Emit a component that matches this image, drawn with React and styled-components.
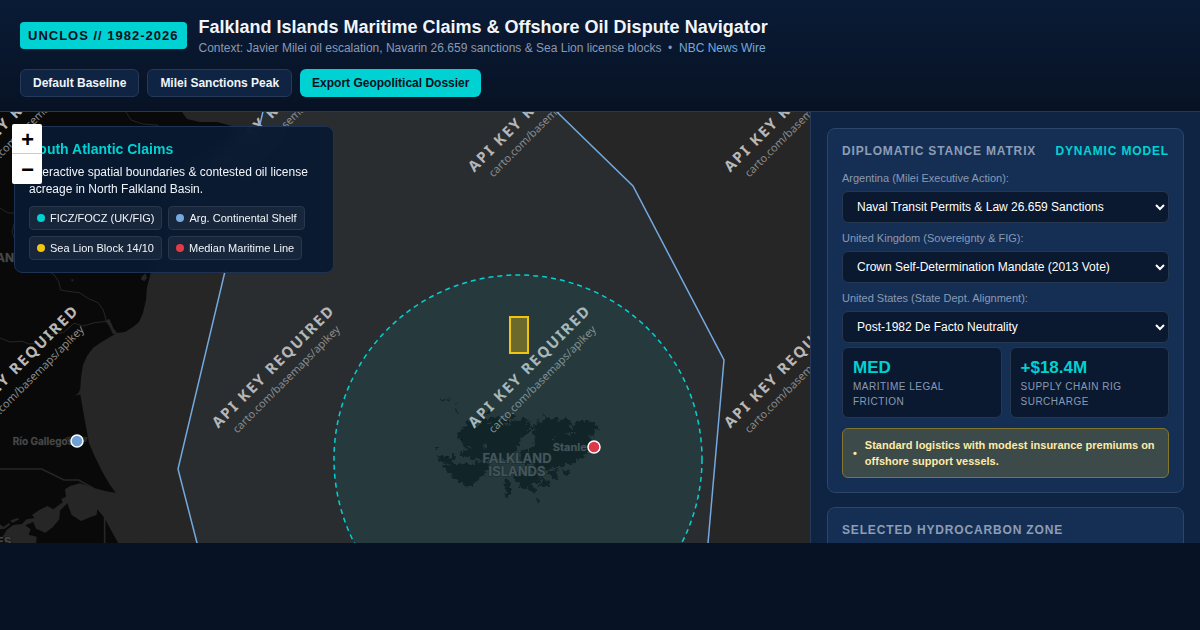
import { useState } from "react";
import styled, { createGlobalStyle } from "styled-components";

const GlobalStyle = createGlobalStyle`
    * {
        box-sizing: border-box;
    }
    body {
        margin: 0;
        background: #071224;
        color: #f1f5f9;
        font-family: "Liberation Sans", Arial, sans-serif;
    }
    button, select {
        font-family: inherit;
    }
`;

const Page = styled.div`
    height: 100vh;
    padding-bottom: 87px;
    display: flex;
    flex-direction: column;
    overflow: hidden;
`;

const Header = styled.header`
    display: flex;
    flex-direction: column;
    gap: 12px;
    padding: 14px 20px;
    background: linear-gradient(180deg, #0a1b36 0%, #071224 100%);
    border-bottom: 1px solid #263750;
`;

const Brand = styled.div`
    display: flex;
    align-items: center;
    gap: 12px;
`;

const Badge = styled.span`
    padding: 6px 8px;
    border-radius: 4px;
    background: #00d2d3;
    color: #061021;
    font-size: 13px;
    line-height: 15px;
    font-weight: 700;
    letter-spacing: 1px;
    white-space: nowrap;
`;

const Title = styled.h1`
    margin: 0;
    font-size: 18px;
    line-height: 26px;
    font-weight: 700;
`;

const Subtitle = styled.p`
    margin: 0;
    color: #8a99b3;
    font-size: 12px;
    line-height: 17px;
`;

const SourceLink = styled.a`
    color: #74a9de;
    text-decoration: none;
`;

const Actions = styled.div`
    display: flex;
    flex-wrap: wrap;
    gap: 8px;
`;

const Button = styled.button`
    padding: 6px 12px;
    border: ${(props) => (props.$primary ? "0" : "1px solid #273956")};
    border-radius: 6px;
    background: ${(props) => (props.$primary ? "#00d2d3" : "#0f2342")};
    color: ${(props) => (props.$primary ? "#061021" : "#f1f5f9")};
    font-size: 12px;
    line-height: 14px;
    font-weight: 700;
    cursor: pointer;
`;

const Workspace = styled.main`
    flex: 1;
    min-height: 0;
    display: grid;
    grid-template-columns: minmax(0, 1fr) 390px;
`;

const MapArea = styled.section`
    position: relative;
    overflow: hidden;
    background: #262626;
`;

const MapCanvas = styled.svg`
    display: block;
    width: 100%;
    height: 100%;
`;

const ZoomControl = styled.div`
    position: absolute;
    top: 12px;
    left: 12px;
    z-index: 2;
    display: flex;
    flex-direction: column;
    border-radius: 2px;
    overflow: hidden;
`;

const ZoomButton = styled.button`
    width: 30px;
    height: 30px;
    padding: 6px 0 0;
    border: 0;
    border-bottom: ${(props) => (props.$divided ? "1px solid #ccc" : "0")};
    background: #fff;
    color: #000;
    font: bold 22px/24px "Liberation Mono", monospace;
    text-indent: 1px;
    cursor: pointer;
`;

const MapCard = styled.aside`
    position: absolute;
    top: 14px;
    left: 14px;
    width: 320px;
    padding: 14px 14px 12px;
    border: 1px solid #1e3354;
    border-radius: 8px;
    background: rgba(8, 25, 49, 0.94);
    backdrop-filter: blur(8px);
`;

const MapCardTitle = styled.h2`
    margin: 0 0 7px;
    color: #00d2d3;
    font-size: 14px;
    line-height: 16px;
`;

const MapCardText = styled.p`
    margin: 0 0 8px;
    font-size: 12px;
    line-height: 17px;
`;

const Legend = styled.ul`
    display: flex;
    flex-wrap: wrap;
    gap: 6px;
    margin: 0;
    padding: 0;
    list-style: none;
`;

const LegendItem = styled.li`
    display: flex;
    align-items: center;
    gap: 5px;
    padding: 4px 7px;
    border: 1px solid #28374c;
    border-radius: 4px;
    background: #17263b;
    font-size: 11px;
    line-height: 14px;
`;

const Dot = styled.span`
    width: 8px;
    height: 8px;
    border-radius: 50%;
    background: ${(props) => props.$color};
`;

const Sidebar = styled.aside`
    display: flex;
    flex-direction: column;
    gap: 14px;
    padding: 16px;
    border-left: 1px solid #263a58;
    background: #0f2342;
    overflow: hidden;
`;

const Card = styled.section`
    flex: none;
    padding: 14px;
    border: 1px solid #2c456b;
    border-radius: 8px;
    background: #152f54;
`;

const CardHeading = styled.h2`
    display: flex;
    justify-content: space-between;
    margin: 0 0 12px;
    color: #8d9db7;
    font-size: 12px;
    line-height: 16px;
    letter-spacing: 0.07em;
    text-transform: uppercase;
`;

const Highlight = styled.span`
    color: #00d2d3;
`;

const Field = styled.div`
    display: flex;
    flex-direction: column;
    gap: 6px;
    margin-bottom: 8px;
`;

const Label = styled.label`
    color: #8a99b3;
    font-size: 11px;
    line-height: 14px;
`;

const Select = styled.select`
    width: 100%;
    height: 32px;
    padding: 6px 10px;
    border: 1px solid #263750;
    border-radius: 6px;
    background: #0a1930;
    color: #fff;
    font-size: 12px;
`;

const Metrics = styled.div`
    display: grid;
    grid-template-columns: 1fr 1fr;
    gap: 8px;
    margin: -4px 0 10px;
`;

const Metric = styled.div`
    padding: 8px 10px;
    border: 1px solid #263750;
    border-radius: 6px;
    background: #0a1930;
`;

const MetricValue = styled.div`
    color: #00d2d3;
    font-size: 17px;
    line-height: 23px;
    font-weight: 700;
`;

const MetricLabel = styled.div`
    color: #8a99b3;
    font-size: 10px;
    line-height: 15px;
    letter-spacing: 0.05em;
    text-transform: uppercase;
`;

const Alert = styled.div`
    display: flex;
    align-items: center;
    gap: 8px;
    padding: 8px 10px;
    border: 1px solid #84752f;
    border-radius: 6px;
    background: #3d4a4a;
    color: #ffeaa7;
    font-size: 11px;
    line-height: 16px;
    font-weight: 700;
`;

const legend = [
  { label: "FICZ/FOCZ (UK/FIG)", color: "#00d2d3" },
  { label: "Arg. Continental Shelf", color: "#74a9de" },
  { label: "Sea Lion Block 14/10", color: "#f1c40f" },
  { label: "Median Maritime Line", color: "#e63946" },
];

const stances = [
  {
    id: "argentina",
    label: "Argentina (Milei Executive Action):",
    value: "Naval Transit Permits & Law 26.659 Sanctions",
  },
  {
    id: "uk",
    label: "United Kingdom (Sovereignty & FIG):",
    value: "Crown Self-Determination Mandate (2013 Vote)",
  },
  {
    id: "us",
    label: "United States (State Dept. Alignment):",
    value: "Post-1982 De Facto Neutrality",
  },
];

// tiles repeat every 256px
const tileMarks = [
  [21, 2], [277, 2], [533, 2], [789, 2],
  [21, 258], [277, 258], [533, 258], [789, 258],
];

const Mainland = () => (
  <g>
    <path
      fill="#090909"
      d="M0 0H182L187 7 200 10 217 10 232 14 236 24 222 40 196 48 176 66 166 92 160 122 151 160
        147 175 146 188 143 201 139 210 133 215 125 220 117 221 110 225 100 231 93 236 87 244 83 253
        81 265 80 281 83 298 86 315 89 331 95 345 103 361 110 373 116 381 108 394 120 431 120 440H0Z"
    />
    <g transform="translate(0 158) scale(0.3333)" fill="#262626">
      <path
        d="M350 668L300 662 270 650 240 640 210 648 195 658 198 680 184 687 188 697 160 718 142 708
          118 720 96 735 104 744 80 748 66 762 40 765 20 780 8 800 18 806 10 829H108L110 800 86 794
          92 778 76 766 100 756 108 776 136 788 158 772 178 748 180 722 202 700 215 735 243 753 272 741
          290 735 292 718 314 745 330 775 360 829H420V600Z"
      />
      <path d="M0 763l10 8 18-13 2 6-16 12-14 2zM30 752l22-8 6 4-20 10z" />
      <path d="M315 150l14-2 12 28 12 14-14 3-10-22z" />
      <path d="M241 355l-4 12-34 32 22-22 18-4zM190 508l12-8 30-2 32 4-6 14-28 4z" />
      <path d="M425 20l12-10 4 14-8 10-10-6zM214 28h6v6h-6zM432 2h8v6h-8z" />
    </g>
    <g
      transform="translate(0 158) scale(0.3333)"
      fill="none"
      stroke="#262626"
      strokeWidth="3"
    >
      <path d="M140 0l22 14 14 20 6 26 22 4 34 4 28 18 28 12 16 22 8 30M322 154l-38 4-34 10-28-8-32 28-40 6-32 26-30 2-22-8-36 2-30-12H0" />
      <path strokeWidth="5" d="M0 597H125L192 630H236L284 657 344 673M314 740V829" />
    </g>
    <path
      fill="none"
      stroke="#242424"
      d="M126 0l5 8 12 4 14 1 5 3M0 96l8 5h10M14 112l-2 8 3 8"
    />
  </g>
);

const Islands = () => (
  <g filter="url(#coast)">
    <g transform="translate(425 273) scale(0.3333)" fill="#090909">
      {/* west */}
      <path
        d="M132 106l14 2 10 18 12-8-4-18 12-6 10 12 14-8 12 4 8-8 16 10 12-2 8 10 14-8 10 6 12-8
          6 10 14 2 8 8 16 4-8 8-14 4-2 12-12 8-8 14-10 10-6 12-14 10-6 14-12 4-16-4-14 8-18-4-14 8
          -14-8-16-2-12 8-6-10-16 2-10-12 4-10 14 6 16-4 12 4 4-8-14-4-10-10-12-2-6-12-14-6-8-8z"
      />
      <path d="M104 156l12 10 8 16 14 8 20-4 14 4 12-6 8 8-16 10-18-2-14 8-22 2-6-8 12-6-12-12-8-14z" />
      <path
        d="M70 240l14-6 10 8 12-10 8 8 14-6 12 6 10-10 14 4 10-6 14 8 6 12-14 8 4 12-16 6-6 10-14 4
          -4 12-12-2-10 8-8-12-12-2-4-10-14-2-6-12-12-6-8-12-6-6z"
      />
      <path d="M34 212l14 4 10-4 16 8 12-12 6 10-8 10 4 12-16-6-14 4-8-10-12-4zM30 184l8 2-2 12-6-2z" />
      <path d="M42 36l14 6 4 8-12-6zM66 42l8 4-2 4zM90 54l10 2-4 6zM90 70l10 4-4 8z" />
      <path d="M176 84l22-6 2 6-16 6zM248 92l16-4 10 6-8 6-14-2zM288 96l12 2 12 10-12 4-14-6z" />
      {/* east */}
      <path
        d="M354 84l10 14 14 6 18-4 8 8 16-8 18 4 4 14-10 6 8 10 4-16 16-8 24-2 18 4 10 8 6 14-14 4
          8 12-22 2 6 10 16 6-6 8-14-2-4 16 6 12-14 4-12 14-18 4-4 14-18-2-14 8-14-4-10 10-18-4-6 8
          -16-6-8 10-18-2-6-8 14-12-16-2-12 4-6-8 14-8-14-6 4-12 14-4-4-10 16-6-6-10 12-4-12-10 8-8
          -16-6 8-10 12 2-10-16 14-2-4-10 16-2 10-4z"
      />
      <path d="M290 202l12-12 10 10 4 14 20 2 12 14-16 8-16-8-14 2-18-8z" />
      <path
        d="M260 272l16-6 14 4 14-6 12 6 10-6 14 8 12-4 8 8-16 6-4 12-16-2-4 12 12 10-2 12-12-8-10-12
          -12 6-14-4 6-12-12-4z"
      />
      <path d="M240 284l10-2 8 10-6 14 6 12-8 18-10-2 6-14-8-14zM348 286l10-6 4 12 12-4 2 10-12 8-14 0-6-8z" />
      <path d="M372 262l18-10 12 4-8 10 6 12-10 6-10-8zM412 254l12 6 12-4-6 12-6 8-8-8zM330 348l12-4-4 8z" />
      <g fill="#262626">
        <path d="M326 122l-18 18-12 18-18 22-8 20 16-8 24-22 14-20zM424 146l20-6 10 6-24 4z" />
        <path d="M182 112l20 0-12 8zM232 116l18-4 10 6-20 4zM182 176l-8 14 10 4zM378 158l16-4-6 10z" />
      </g>
    </g>
  </g>
);

const Watermark = ({ x, y }) => (
  <g
    transform={`translate(${x} ${y}) rotate(-45)`}
    fontFamily="'Noto Sans', sans-serif"
    textAnchor="middle"
  >
    <text fill="#b8b8b8" fontSize="15" fontWeight="700" letterSpacing="0.12em">
      API KEY REQUIRED
    </text>
    <text y="17" fill="#8a8a8a" fontSize="11">
      carto.com/basemaps/apikey
    </text>
  </g>
);

const MapView = () => (
  <MapCanvas
    viewBox="0 0 810 431"
    preserveAspectRatio="xMidYMid slice"
    role="img"
    aria-label="South Atlantic map"
  >
    <defs>
      <filter id="coast">
        <feTurbulence type="fractalNoise" baseFrequency="0.25" numOctaves="2" seed="4" />
        <feDisplacementMap in="SourceGraphic" scale="7" xChannelSelector="R" yChannelSelector="G" />
      </filter>
    </defs>
    <Mainland />
    <Islands />
    <g
      fill="#484848"
      stroke="#141414"
      strokeWidth="1"
      paintOrder="stroke"
      fontFamily="Inter, sans-serif"
      fontWeight="700"
      textAnchor="middle"
    >
      <text x="43" y="333" fontSize="10">Río Gallegos</text>
      <text x="573" y="339" fontSize="11">Stanley</text>
      <text x="517" y="351" fontSize="13">FALKLAND</text>
      <text x="517" y="364" fontSize="13">ISLANDS</text>
      <text x="5" y="150" fontSize="12">AN</text>
      <text x="4" y="434" fontSize="12">ES</text>
    </g>
    {tileMarks.map(([x, y]) => (
      <Watermark key={`${x}-${y}`} x={x} y={y} />
    ))}
    <path
      d="M280 -72L178 357 197 431 222 530H700L708 431 724 248 633 74 483 -72Z"
      fill="#74a9de"
      fillOpacity="0.06"
      stroke="#74a9de"
      strokeWidth="1.5"
    />
    <circle
      cx="518"
      cy="347"
      r="184"
      fill="#00d2d3"
      fillOpacity="0.08"
      stroke="#00d2d3"
      strokeWidth="1.5"
      strokeDasharray="5 4"
    />
    <rect
      x="510"
      y="205"
      width="18"
      height="36"
      fill="#f1c40f"
      fillOpacity="0.35"
      stroke="#f1c40f"
      strokeWidth="2"
    />
    <circle cx="77" cy="329" r="6" fill="#6da2d6" stroke="#fff" strokeWidth="1.5" />
    <circle cx="594" cy="335" r="6" fill="#dc3848" stroke="#fff" strokeWidth="1.5" />
  </MapCanvas>
);

const StanceField = ({ stance }) => {
  const [value, setValue] = useState(stance.value);

  return (
    <Field>
      <Label htmlFor={stance.id}>{stance.label}</Label>
      <Select
        id={stance.id}
        value={value}
        onChange={(e) => setValue(e.target.value)}
      >
        <option>{stance.value}</option>
      </Select>
    </Field>
  );
};

const App = () => {
  return (
    <Page>
      <GlobalStyle />
      <Header>
        <Brand>
          <Badge>UNCLOS // 1982-2026</Badge>
          <div>
            <Title>Falkland Islands Maritime Claims &amp; Offshore Oil Dispute Navigator</Title>
            <Subtitle>
              Context: Javier Milei oil escalation, Navarin 26.659 sanctions &amp; Sea Lion
              license blocks &nbsp;•&nbsp; <SourceLink href="#wire">NBC News Wire</SourceLink>
            </Subtitle>
          </div>
        </Brand>
        <Actions>
          <Button>Default Baseline</Button>
          <Button>Milei Sanctions Peak</Button>
          <Button $primary>Export Geopolitical Dossier</Button>
        </Actions>
      </Header>
      <Workspace>
        <MapArea>
          <MapView />
          <MapCard>
            <MapCardTitle>South Atlantic Claims</MapCardTitle>
            <MapCardText>
              Interactive spatial boundaries &amp; contested oil license acreage in North
              Falkland Basin.
            </MapCardText>
            <Legend>
              {legend.map((item) => (
                <LegendItem key={item.label}>
                  <Dot $color={item.color} />
                  {item.label}
                </LegendItem>
              ))}
            </Legend>
          </MapCard>
          <ZoomControl>
            <ZoomButton $divided aria-label="Zoom in">+</ZoomButton>
            <ZoomButton aria-label="Zoom out">−</ZoomButton>
          </ZoomControl>
        </MapArea>
        <Sidebar>
          <Card>
            <CardHeading>
              Diplomatic Stance Matrix
              <Highlight>Dynamic Model</Highlight>
            </CardHeading>
            {stances.map((stance) => (
              <StanceField key={stance.id} stance={stance} />
            ))}
            <Metrics>
              <Metric>
                <MetricValue>MED</MetricValue>
                <MetricLabel>Maritime Legal Friction</MetricLabel>
              </Metric>
              <Metric>
                <MetricValue>+$18.4M</MetricValue>
                <MetricLabel>Supply Chain Rig Surcharge</MetricLabel>
              </Metric>
            </Metrics>
            <Alert>
              <span>•</span>
              <span>
                Standard logistics with modest insurance premiums on offshore support vessels.
              </span>
            </Alert>
          </Card>
          <Card>
            <CardHeading>Selected Hydrocarbon Zone</CardHeading>
          </Card>
        </Sidebar>
      </Workspace>
    </Page>
  );
};

export default App;
